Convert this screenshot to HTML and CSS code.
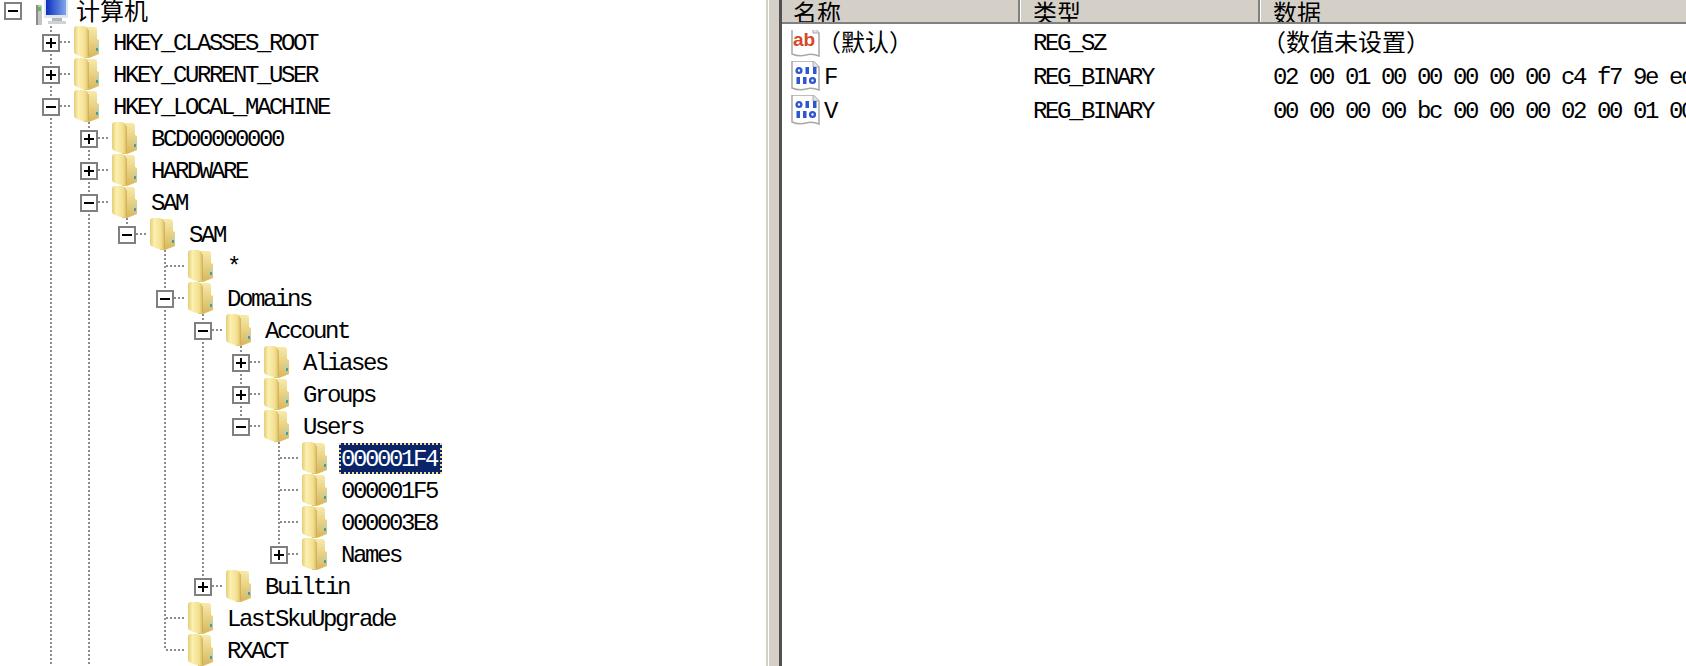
FILE: index.html
```html
<!DOCTYPE html>
<html lang="zh-CN">
<head>
    <meta charset="UTF-8">
    <meta name="viewport" content="width=device-width, initial-scale=1.0">
    <title>注册表编辑器</title>
    <link rel="stylesheet" href="styles.css">
</head>
<body>
    <!-- icon sprites -->
    <svg class="sprites" width="0" height="0">
        <defs>
            <linearGradient id="leafFront" x1="0" y1="0" x2="1" y2="0">
                <stop offset="0" stop-color="#e6cd78"/>
                <stop offset="0.3" stop-color="#fbf0b0"/>
                <stop offset="0.75" stop-color="#f3de8e"/>
                <stop offset="1" stop-color="#d4b55c"/>
            </linearGradient>
            <linearGradient id="leafBack" x1="0" y1="0" x2="0" y2="1">
                <stop offset="0" stop-color="#f8eaa8"/>
                <stop offset="1" stop-color="#d6b65c"/>
            </linearGradient>
            <linearGradient id="screen" x1="0" y1="0" x2="1" y2="0">
                <stop offset="0" stop-color="#0b2fc0"/>
                <stop offset="1" stop-color="#7fa6e8"/>
            </linearGradient>
        </defs>
        <symbol id="folder" viewBox="0 0 26 32">
            <path d="M11 1 h9 q3 0 3 3 v9 l2 1 v14 l-10 4 h-5z" fill="url(#leafBack)"/>
            <path d="M0 3 q0-3 3-3 h7 q4 1 4 4 v25 l1 3 q-8-1-12-3 q-3-1-3-3z" fill="url(#leafFront)"/>
            <rect x="14" y="4" width="1" height="26" fill="#c9a94f" opacity="0.7"/>
            <rect x="22" y="19" width="2" height="3" fill="#a8d8d0"/>
            <rect x="22" y="22" width="2" height="3" fill="#3a9fb8"/>
        </symbol>
        <symbol id="computer" viewBox="0 0 33 32">
            <rect x="1" y="11" width="6" height="20" fill="#c4c4c0"/>
            <rect x="1" y="11" width="2" height="20" fill="#8a8a88"/>
            <rect x="3" y="13" width="3" height="4" fill="#58c050"/>
            <rect x="9" y="0" width="24" height="24" fill="#dfe6ee"/>
            <rect x="11" y="0" width="20" height="21" fill="url(#screen)"/>
            <rect x="17" y="24" width="10" height="3" fill="#b4b8bc"/>
            <rect x="13" y="27" width="18" height="3" fill="#d0d2d4"/>
        </symbol>
        <symbol id="pageShape" viewBox="0 0 32 32">
            <path d="M2 1 h21 l6 6 v23 q-7-3-13-1 q-7 2-14-1z" fill="#fff" stroke="#a8a8a8" stroke-width="1.5"/>
            <path d="M23 1 v6 h6" fill="#e4e4e4" stroke="#a8a8a8" stroke-width="1"/>
        </symbol>
    </svg>

    <div class="window">
        <div class="tree-pane">
            <ul class="tree">
                <li class="root">
                    <div class="row">
                        <span class="toggle minus"></span>
                        <svg class="computer"><use href="#computer"/></svg>
                        <span class="label cjk">计算机</span>
                    </div>
                    <ul>
                        <li>
                            <div class="row">
                                <span class="toggle plus"></span>
                                <svg class="folder"><use href="#folder"/></svg>
                                <span class="label">HKEY_CLASSES_ROOT</span>
                            </div>
                        </li>
                        <li>
                            <div class="row">
                                <span class="toggle plus"></span>
                                <svg class="folder"><use href="#folder"/></svg>
                                <span class="label">HKEY_CURRENT_USER</span>
                            </div>
                        </li>
                        <li>
                            <div class="row">
                                <span class="toggle minus"></span>
                                <svg class="folder"><use href="#folder"/></svg>
                                <span class="label">HKEY_LOCAL_MACHINE</span>
                            </div>
                            <ul>
                                <li>
                                    <div class="row">
                                        <span class="toggle plus"></span>
                                        <svg class="folder"><use href="#folder"/></svg>
                                        <span class="label">BCD00000000</span>
                                    </div>
                                </li>
                                <li>
                                    <div class="row">
                                        <span class="toggle plus"></span>
                                        <svg class="folder"><use href="#folder"/></svg>
                                        <span class="label">HARDWARE</span>
                                    </div>
                                </li>
                                <li>
                                    <div class="row">
                                        <span class="toggle minus"></span>
                                        <svg class="folder"><use href="#folder"/></svg>
                                        <span class="label">SAM</span>
                                    </div>
                                    <ul>
                                        <li>
                                            <div class="row">
                                                <span class="toggle minus"></span>
                                                <svg class="folder"><use href="#folder"/></svg>
                                                <span class="label">SAM</span>
                                            </div>
                                            <ul>
                                                <li>
                                                    <div class="row">
                                                        <span class="toggle"></span>
                                                        <svg class="folder"><use href="#folder"/></svg>
                                                        <span class="label">*</span>
                                                    </div>
                                                </li>
                                                <li>
                                                    <div class="row">
                                                        <span class="toggle minus"></span>
                                                        <svg class="folder"><use href="#folder"/></svg>
                                                        <span class="label">Domains</span>
                                                    </div>
                                                    <ul>
                                                        <li>
                                                            <div class="row">
                                                                <span class="toggle minus"></span>
                                                                <svg class="folder"><use href="#folder"/></svg>
                                                                <span class="label">Account</span>
                                                            </div>
                                                            <ul>
                                                                <li>
                                                                    <div class="row">
                                                                        <span class="toggle plus"></span>
                                                                        <svg class="folder"><use href="#folder"/></svg>
                                                                        <span class="label">Aliases</span>
                                                                    </div>
                                                                </li>
                                                                <li>
                                                                    <div class="row">
                                                                        <span class="toggle plus"></span>
                                                                        <svg class="folder"><use href="#folder"/></svg>
                                                                        <span class="label">Groups</span>
                                                                    </div>
                                                                </li>
                                                                <li>
                                                                    <div class="row">
                                                                        <span class="toggle minus"></span>
                                                                        <svg class="folder"><use href="#folder"/></svg>
                                                                        <span class="label">Users</span>
                                                                    </div>
                                                                    <ul>
                                                                        <li>
                                                                            <div class="row">
                                                                                <span class="toggle"></span>
                                                                                <svg class="folder"><use href="#folder"/></svg>
                                                                                <span class="label selected">000001F4</span>
                                                                            </div>
                                                                        </li>
                                                                        <li>
                                                                            <div class="row">
                                                                                <span class="toggle"></span>
                                                                                <svg class="folder"><use href="#folder"/></svg>
                                                                                <span class="label">000001F5</span>
                                                                            </div>
                                                                        </li>
                                                                        <li>
                                                                            <div class="row">
                                                                                <span class="toggle"></span>
                                                                                <svg class="folder"><use href="#folder"/></svg>
                                                                                <span class="label">000003E8</span>
                                                                            </div>
                                                                        </li>
                                                                        <li>
                                                                            <div class="row">
                                                                                <span class="toggle plus"></span>
                                                                                <svg class="folder"><use href="#folder"/></svg>
                                                                                <span class="label">Names</span>
                                                                            </div>
                                                                        </li>
                                                                    </ul>
                                                                </li>
                                                            </ul>
                                                        </li>
                                                        <li>
                                                            <div class="row">
                                                                <span class="toggle plus"></span>
                                                                <svg class="folder"><use href="#folder"/></svg>
                                                                <span class="label">Builtin</span>
                                                            </div>
                                                        </li>
                                                    </ul>
                                                </li>
                                                <li>
                                                    <div class="row">
                                                        <span class="toggle"></span>
                                                        <svg class="folder"><use href="#folder"/></svg>
                                                        <span class="label">LastSkuUpgrade</span>
                                                    </div>
                                                </li>
                                                <li>
                                                    <div class="row">
                                                        <span class="toggle"></span>
                                                        <svg class="folder"><use href="#folder"/></svg>
                                                        <span class="label">RXACT</span>
                                                    </div>
                                                </li>
                                            </ul>
                                        </li>
                                    </ul>
                                </li>
                                <li>
                                    <div class="row">
                                        <span class="toggle plus"></span>
                                        <svg class="folder"><use href="#folder"/></svg>
                                        <span class="label">SECURITY</span>
                                    </div>
                                </li>
                            </ul>
                        </li>
                        <li>
                            <div class="row">
                                <span class="toggle plus"></span>
                                <svg class="folder"><use href="#folder"/></svg>
                                <span class="label">HKEY_USERS</span>
                            </div>
                        </li>
                    </ul>
                </li>
            </ul>
        </div>

        <div class="splitter"></div>

        <div class="list-pane">
            <div class="list-header">
                <div class="col-head first cjk">名称</div>
                <div class="col-head cjk">类型</div>
                <div class="col-head cjk">数据</div>
            </div>
            <div class="list-body">
                <div class="list-row">
                    <div class="cell name-cell">
                        <svg class="value-icon" viewBox="0 0 32 32">
                            <use href="#pageShape"/>
                            <text class="ab-text" x="14" y="20" text-anchor="middle">ab</text>
                        </svg>
                        <span class="cjk value-name paren">（默认）</span>
                    </div>
                    <div class="cell">REG_SZ</div>
                    <div class="cell cjk"><span class="paren">（数值未设置）</span></div>
                </div>
                <div class="list-row">
                    <div class="cell name-cell">
                        <svg class="value-icon" viewBox="0 0 32 32">
                            <use href="#pageShape"/>
                            <g class="bits">
                                <circle cx="9" cy="10.5" r="2.4"/>
                                <rect x="15.5" y="7" width="3.5" height="7"/>
                                <rect x="23" y="7" width="3.5" height="7"/>
                                <rect x="6.5" y="17" width="3.5" height="7"/>
                                <rect x="13" y="17" width="3.5" height="7"/>
                                <circle cx="22.5" cy="20.5" r="2.4"/>
                            </g>
                        </svg>
                        <span class="value-name">F</span>
                    </div>
                    <div class="cell">REG_BINARY</div>
                    <div class="cell">02 00 01 00 00 00 00 00 c4 f7 9e ed 01 00 00 00</div>
                </div>
                <div class="list-row">
                    <div class="cell name-cell">
                        <svg class="value-icon" viewBox="0 0 32 32">
                            <use href="#pageShape"/>
                            <g class="bits">
                                <circle cx="9" cy="10.5" r="2.4"/>
                                <rect x="15.5" y="7" width="3.5" height="7"/>
                                <rect x="23" y="7" width="3.5" height="7"/>
                                <rect x="6.5" y="17" width="3.5" height="7"/>
                                <rect x="13" y="17" width="3.5" height="7"/>
                                <circle cx="22.5" cy="20.5" r="2.4"/>
                            </g>
                        </svg>
                        <span class="value-name">V</span>
                    </div>
                    <div class="cell">REG_BINARY</div>
                    <div class="cell">00 00 00 00 bc 00 00 00 02 00 01 00 00 00 00 00</div>
                </div>
            </div>
        </div>
    </div>
</body>
</html>
```

FILE: styles.css
```css
html, body {
    margin: 0;
    padding: 0;
    height: 100%;
    overflow: hidden;
    background: #ffffff;
}
body {
    font-family: "Liberation Mono", "Noto Sans CJK SC", monospace;
    font-size: 24px;
    letter-spacing: -2.4px;
    color: #000000;
}
.cjk {
    font-family: "Noto Sans CJK SC", sans-serif;
    letter-spacing: 0;
}
.sprites {
    position: absolute;
}
.window {
    display: flex;
    height: 666px;
    overflow: hidden;
}

/* left tree */
.tree-pane {
    width: 766px;
    flex-shrink: 0;
    overflow: hidden;
}
.tree, .tree ul {
    list-style: none;
    margin: 0;
    padding: 0;
}
.tree {
    margin: -6px 0 0 -6px;
}
.tree ul {
    padding-left: 38px;
}
.tree li {
    position: relative;
}
.tree ul > li::before {
    content: "";
    position: absolute;
    left: 18px;
    top: 0;
    bottom: 0;
    width: 2px;
    background: repeating-linear-gradient(to bottom, #8c8c8c 0 2px, transparent 2px 4px);
}
.tree ul > li:last-child::before {
    bottom: auto;
    height: 16px;
}
.tree ul > li::after {
    content: "";
    position: absolute;
    left: 20px;
    top: 15px;
    width: 20px;
    height: 2px;
    background: repeating-linear-gradient(to right, #8c8c8c 0 2px, transparent 2px 4px);
}
.row {
    position: relative;
    z-index: 1;
    display: flex;
    align-items: center;
    height: 32px;
}
.toggle {
    width: 18px;
    height: 18px;
    margin: 2px 10px 0 10px;
    flex-shrink: 0;
    box-sizing: border-box;
    position: relative;
}
.toggle.plus, .toggle.minus {
    border: 2px solid #808080;
    background: #ffffff;
}
.toggle.plus::before, .toggle.minus::before {
    content: "";
    position: absolute;
    left: 2px;
    right: 2px;
    top: 6px;
    height: 2px;
    background: #000000;
}
.toggle.plus::after {
    content: "";
    position: absolute;
    top: 2px;
    bottom: 2px;
    left: 6px;
    width: 2px;
    background: #000000;
}
.folder {
    width: 26px;
    height: 32px;
    margin-left: 4px;
    flex-shrink: 0;
}
.computer {
    width: 33px;
    height: 32px;
    margin-left: 3px;
    flex-shrink: 0;
}
.label {
    margin-left: 11px;
    padding: 0 3px 0 0;
    border: 2px dotted transparent;
    height: 27px;
    line-height: 29px;
    white-space: nowrap;
}
.root > .row .label {
    margin-left: 6px;
    line-height: 25px;
}
.label.selected {
    background: #0a246a;
    color: #ffffff;
    border-color: #f0d890;
}

/* splitter */
.splitter {
    width: 10px;
    flex-shrink: 0;
    margin-left: 2px;
    background: #d4d0c8;
    border-left: 1px solid #ffffff;
    border-right: 3px solid #505050;
    box-shadow: -2px 0 0 #d4d0c8;
}

/* right list */
.list-pane {
    flex: 1;
    min-width: 0;
    overflow: hidden;
}
.list-header, .list-row {
    display: grid;
    grid-template-columns: 238px 240px 1fr;
}
.list-header {
    height: 22px;
    background: #d4d0c8;
    border-bottom: 2px solid #808080;
    overflow: hidden;
}
.col-head {
    padding-left: 13px;
    line-height: 24px;
    border-right: 2px solid #808080;
    box-shadow: 1px 0 0 #ffffff;
}
.col-head.first {
    padding-left: 11px;
}
.col-head:last-child {
    border-right: none;
    box-shadow: none;
}
.list-body {
    padding-top: 3px;
}
.list-row {
    height: 34px;
    align-items: center;
}
.cell {
    padding-left: 13px;
    white-space: nowrap;
    overflow: hidden;
    line-height: 34px;
}
.list-row .cjk {
    margin-top: -6px;
}
.name-cell {
    display: flex;
    align-items: center;
    padding-left: 8px;
}
.value-icon {
    width: 32px;
    height: 32px;
    margin-top: -4px;
    flex-shrink: 0;
}
.value-name {
    margin-left: 2px;
}
.paren {
    margin-left: -11px;
}
.name-cell .paren {
    margin-left: -5px;
}
.ab-text {
    font-family: "Liberation Sans", sans-serif;
    font-size: 19px;
    font-weight: bold;
    letter-spacing: 0;
    fill: #d5472a;
}
.bits rect {
    fill: #2f55d0;
}
.bits circle {
    fill: none;
    stroke: #2f55d0;
    stroke-width: 2.4;
}
```
